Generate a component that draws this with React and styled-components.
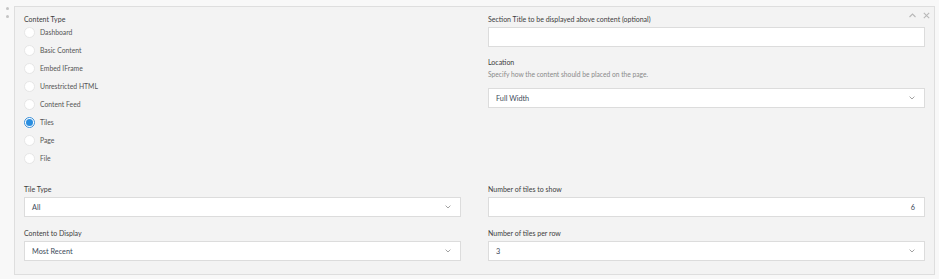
import React from 'react'
import styled, { createGlobalStyle } from 'styled-components'

const Global = createGlobalStyle`
  body {
    margin: 0;
    background: #f8f8f8;
    font-family: Lato, "Open Sans", sans-serif;
    color: #333;
  }
`;

const Page = styled.div`
  display: flex;
  padding: 6px 4px 4px 0;
`;

const Handle = styled.div`
  width: 14px;
  display: flex;
  flex-direction: column;
  align-items: center;
  gap: 5px;
  padding-top: 1px;
`;

const Dot = styled.span`
  width: 3px;
  height: 3px;
  border-radius: 50%;
  background: #c4c4c4;
`;

const Panel = styled.div`
  position: relative;
  flex: 1;
  height: 269px;
  box-sizing: border-box;
  background: #f3f3f3;
  border: 1px solid #dedede;
  padding: 7px 9px 0 9px;
  display: grid;
  grid-template-columns: 1fr 1fr;
  align-content: start;
  column-gap: 27px;
`;

const Tools = styled.div`
  position: absolute;
  top: 4px;
  right: 3px;
  display: flex;
  gap: 5px;
`;

const Column = styled.div`
  display: flex;
  flex-direction: column;
`;

const Label = styled.div`
  font-size: 7px;
  line-height: 10px;
  color: #3d3d3d;
  margin-bottom: ${p => p.$mb ?? 3}px;
`;

const Help = styled.div`
  font-size: 6.7px;
  line-height: 10px;
  color: #8a8a8a;
  margin-bottom: 9px;
`;

const Field = styled.div`
  margin-top: ${p => p.$mt || 0}px;
`;

const Box = styled.div`
  height: 20px;
  box-sizing: border-box;
  background: #fff;
  border: 1px solid #dcdcdc;
  display: flex;
  align-items: center;
  justify-content: ${p => (p.$right ? 'flex-end' : 'space-between')};
  padding: 0 9px 0 7px;
  font-size: 7.3px;
  color: #3c4a5a;
`;

const Radios = styled.div`
  display: flex;
  flex-direction: column;
`;

const RadioRow = styled.div`
  height: 18px;
  display: flex;
  align-items: center;
  gap: 5px;
  font-size: 6.8px;
  color: #555;
`;

const Circle = styled.span`
  width: 11px;
  height: 11px;
  box-sizing: border-box;
  border-radius: 50%;
  background: #fff;
  border: 1px solid ${p => (p.$on ? '#3a8fd8' : '#e6e6e6')};
  display: flex;
  align-items: center;
  justify-content: center;
  &::after {
    content: '';
    display: ${p => (p.$on ? 'block' : 'none')};
    width: 7px;
    height: 7px;
    border-radius: 50%;
    background: #2a8ee0;
  }
`;

const Chevron = () => (
  <svg width="6" height="4" viewBox="0 0 6 4">
    <path d="M0.6 0.6 L3 3 L5.4 0.6" fill="none" stroke="#999" strokeWidth="0.9" />
  </svg>
);

const Select = ({ value }) => (
  <Box>
    <span>{value}</span>
    <Chevron />
  </Box>
);

const types = ['Dashboard', 'Basic Content', 'Embed IFrame', 'Unrestricted HTML', 'Content Feed', 'Tiles', 'Page', 'File'];

const App = () => (
  <>
    <Global />
    <Page>
      <Handle>
        <Dot />
        <Dot />
      </Handle>
      <Panel>
        <Tools>
          <svg width="9" height="9" viewBox="0 0 9 9">
            <path d="M1.5 6 L4.5 3 L7.5 6" fill="none" stroke="#b8b8b8" strokeWidth="1.1" />
          </svg>
          <svg width="9" height="9" viewBox="0 0 9 9">
            <path d="M1.8 1.8 L7.2 7.2 M7.2 1.8 L1.8 7.2" fill="none" stroke="#b8b8b8" strokeWidth="1.1" />
          </svg>
        </Tools>
        <Column>
          <Label $mb={-1}>Content Type</Label>
          <Radios>
            {types.map(t => (
              <RadioRow key={t}>
                <Circle $on={t === 'Tiles'} />
                {t}
              </RadioRow>
            ))}
          </Radios>
        </Column>
        <Column>
          <Label>Section Title to be displayed above content (optional)</Label>
          <Box />
          <Field $mt={10}>
            <Label $mb={2}>Location</Label>
            <Help>Specify how the content should be placed on the page.</Help>
            <Select value="Full Width" />
          </Field>
        </Column>
        <Column>
          <Field $mt={17}>
            <Label>Tile Type</Label>
            <Select value="All" />
          </Field>
          <Field $mt={11}>
            <Label>Content to Display</Label>
            <Select value="Most Recent" />
          </Field>
        </Column>
        <Column>
          <Field $mt={17}>
            <Label>Number of tiles to show</Label>
            <Box $right>6</Box>
          </Field>
          <Field $mt={11}>
            <Label>Number of tiles per row</Label>
            <Select value="3" />
          </Field>
        </Column>
      </Panel>
    </Page>
  </>
);

export default App;
